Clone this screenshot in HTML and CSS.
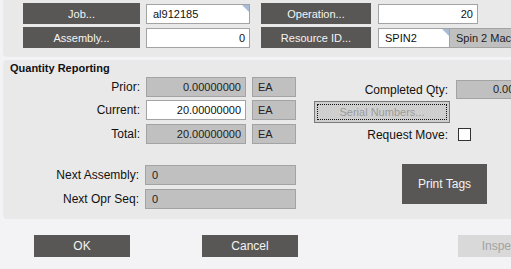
FILE: index.html
```html
<!DOCTYPE html>
<html>
<head>
<meta charset="utf-8">
<link rel="stylesheet" href="styles.css">
</head>
<body>
<div class="page">
  <div class="panel top">
    <div class="trow">
      <div class="btn b-job">Job...</div>
      <div class="field white w104 tl">al912185<span class="corner"></span></div>
      <div class="btn b-op">Operation...</div>
      <div class="field white w100 tr">20</div>
    </div>
    <div class="trow">
      <div class="btn b-job">Assembly...</div>
      <div class="field white w104 tr">0</div>
      <div class="btn b-op">Resource ID...</div>
      <div class="field white w72 tl">SPIN2<span class="corner"></span></div>
      <div class="field ro w110 tl">Spin 2 Machine</div>
    </div>
  </div>

  <div class="panel qty">
    <div class="heading">Quantity Reporting</div>
    <div class="cols">
      <div class="left">
        <div class="lrow r1">
          <div class="lbl">Prior:</div>
          <div class="field ro w100 tr">0.00000000</div>
          <div class="field ro ea">EA</div>
        </div>
        <div class="lrow r2">
          <div class="lbl">Current:</div>
          <div class="field white w100 tr">20.00000000</div>
          <div class="field ro ea">EA</div>
        </div>
        <div class="lrow r3">
          <div class="lbl">Total:</div>
          <div class="field ro w100 tr">20.00000000</div>
          <div class="field ro ea">EA</div>
        </div>
        <div class="lrow r4">
          <div class="lbl">Next Assembly:</div>
          <div class="field ro w152 tl">0</div>
        </div>
        <div class="lrow r5">
          <div class="lbl">Next Opr Seq:</div>
          <div class="field ro w152 tl">0</div>
        </div>
      </div>
      <div class="right">
        <div class="rrow c1">
          <div class="rlbl">Completed Qty:</div>
          <div class="field ro w100 tr cq">0.00000000</div>
        </div>
        <div class="rrow c2">
          <div class="serial"><span class="focus">Serial Numbers...</span></div>
        </div>
        <div class="rrow c3">
          <div class="rlbl">Request Move:</div>
          <div class="check"></div>
        </div>
        <div class="rrow c4">
          <div class="btn print">Print Tags</div>
        </div>
      </div>
    </div>
  </div>

  <div class="actions">
    <div class="btn act ok">OK</div>
    <div class="btn act cancel">Cancel</div>
    <div class="btn act inspect">Inspect...</div>
  </div>
</div>
</body>
</html>
```

FILE: styles.css
```css
html, body {
  margin: 0;
  padding: 0;
  background: #f3f3f5;
  overflow: hidden;
}
body {
  width: 511px;
  height: 269px;
  font-family: "Liberation Sans", Arial, sans-serif;
  font-size: 12px;
  color: #111;
}
.page {
  width: 700px;
}
.panel {
  background: #e9e9e9;
  margin-left: 3px;
  width: 690px;
  box-sizing: border-box;
}
.top {
  height: 57px;
  padding: 3px 0 0 20px;
  border-radius: 0 0 0 4px;
}
.trow {
  display: flex;
  align-items: flex-start;
  height: 21px;
  margin-bottom: 3px;
}
.btn {
  background: #595755;
  color: #f4f4f4;
  font-size: 11px;
  display: flex;
  align-items: center;
  justify-content: center;
  box-sizing: border-box;
}
.b-job {
  width: 117px;
  height: 21px;
}
.b-op {
  width: 110px;
  height: 21px;
  margin-left: 11px;
}
.field {
  box-sizing: border-box;
  height: 20px;
  border: 1px solid #a3a3a3;
  font-size: 11px;
  line-height: 18px;
  padding: 0 4px 0 6px;
  white-space: nowrap;
  overflow: hidden;
  position: relative;
}
.trow .field {
  margin-top: 1px;
}
.trow .b-job + .field {
  margin-left: 6px;
}
.trow .b-op + .field {
  margin-left: 7px;
}
.white { background: #fff; }
.ro { background: #c0c0c0; color: #222; }
.tr { text-align: right; padding: 0 4px 0 4px; }
.tl { text-align: left; }
.w104 { width: 104px; }
.w100 { width: 100px; }
.w72 { width: 72px; }
.w110 { width: 110px; border-left: none; }
.w152 { width: 152px; }
.corner {
  position: absolute;
  top: 0;
  right: 0;
  width: 0;
  height: 0;
  border-top: 7px solid #a9bcd6;
  border-left: 7px solid transparent;
}

.qty {
  margin-top: 3px;
  height: 159px;
  border-radius: 4px 0 0 4px;
}
.heading {
  font-weight: bold;
  font-size: 11px;
  height: 17px;
  line-height: 13px;
  padding: 2px 0 0 7px;
  box-sizing: border-box;
}
.cols {
  display: flex;
}
.left {
  width: 293px;
}
.lrow {
  display: flex;
  align-items: center;
  height: 20px;
}
.lrow .field { height: 20px; }
.r2 { margin-top: 3px; }
.r3 { margin-top: 4px; }
.r4 { margin-top: 21px; }
.r5 { margin-top: 4px; }
.lbl {
  width: 137px;
  text-align: right;
  margin-right: 6px;
}
.ea {
  width: 44px;
  margin-left: 6px;
  padding-left: 5px;
}
.right {
  width: 400px;
}
.rrow {
  display: flex;
  align-items: center;
}
.rlbl {
  width: 152px;
  text-align: right;
  margin-right: 8px;
}
.c1 { margin-top: 3px; height: 19px; }
.c1 .field { height: 19px; line-height: 17px; }
.cq { padding-right: 4px; }
.c2 { margin-top: 2px; height: 22px; }
.serial {
  margin-left: 18px;
  width: 136px;
  height: 22px;
  box-sizing: border-box;
  border: 1px solid #7a7a7a;
  background: #cfcfcf;
  padding: 2px;
  display: flex;
}
.focus {
  flex: 1;
  border: 1px dotted #111;
  color: #9a9a9a;
  font-size: 11px;
  display: flex;
  align-items: center;
  justify-content: center;
}
.c3 { margin-top: 5px; height: 13px; }
.check {
  width: 13px;
  height: 13px;
  box-sizing: border-box;
  border: 1px solid #333;
  background: #fff;
  margin-left: 2px;
}
.c4 { margin-top: 23px; }
.print {
  margin-left: 106px;
  width: 85px;
  height: 40px;
  font-size: 12px;
}
.actions {
  display: flex;
  margin-top: 16px;
  padding-left: 34px;
}
.act {
  width: 96px;
  height: 22px;
  font-size: 12px;
}
.cancel { margin-left: 72px; }
.inspect {
  margin-left: 160px;
  background: #d9d9d9;
  color: #a3a3a3;
}
```
